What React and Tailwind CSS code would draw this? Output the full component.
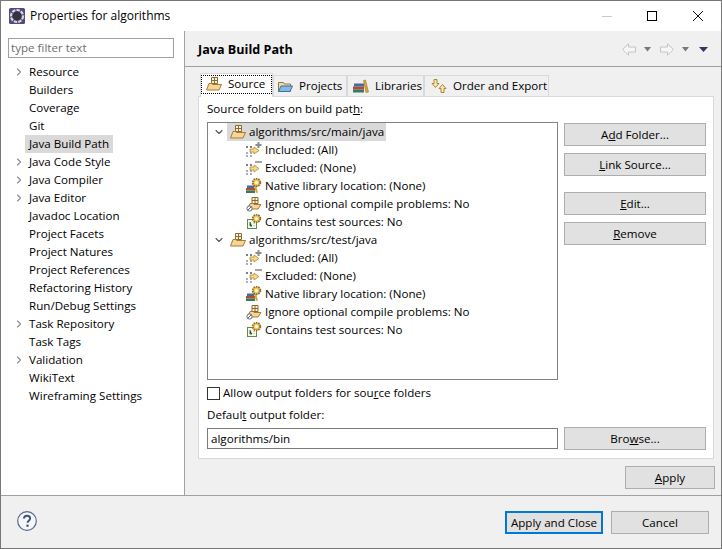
import { ChevronRight, ChevronDown } from "lucide-react"

const FONT = "font-['Open_Sans','Noto_Sans',sans-serif]"

const navItems = [
  ["Resource", true],
  ["Builders"],
  ["Coverage"],
  ["Git"],
  ["Java Build Path", false, true],
  ["Java Code Style", true],
  ["Java Compiler", true],
  ["Java Editor", true],
  ["Javadoc Location"],
  ["Project Facets"],
  ["Project Natures"],
  ["Project References"],
  ["Refactoring History"],
  ["Run/Debug Settings"],
  ["Task Repository", true],
  ["Task Tags"],
  ["Validation", true],
  ["WikiText"],
  ["Wireframing Settings"],
]

function EclipseIcon() {
  return (
    <svg width="16" height="16" viewBox="0 0 16 16">
      <rect x="0" y="0" width="16" height="16" rx="1.5" fill="#54487c" />
      <circle cx="8" cy="8" r="6" fill="none" stroke="#d8d8dc" strokeWidth="2.2" strokeDasharray="3.4 1.1" />
      <circle cx="8" cy="8" r="4.4" fill="#34323e" />
    </svg>
  )
}

function SourceFolderIcon() {
  return (
    <svg width="16" height="16" viewBox="0 0 16 16">
      <path d="M5.5 1.5h6v6h-6z" fill="#fbf3e0" stroke="#8a6a30" />
      <path d="M8.5 1.5v6M5.5 4.5h6" stroke="#8a6a30" />
      <path d="M0.5 14 3 7.5h2.5l1 1h9L13 14z" fill="#f6d596" stroke="#a67c34" />
    </svg>
  )
}

function ProjectIcon() {
  return (
    <svg width="16" height="16" viewBox="0 0 16 16">
      <path d="M1.5 4.5h5l1 1.5h6v7.5h-12z" fill="#eadcae" stroke="#8c7a45" />
      <path d="M1.5 13.5 4 8h11.5L13 13.5z" fill="#86b8e2" stroke="#3f6f9f" />
    </svg>
  )
}

function LibraryIcon() {
  return (
    <svg width="16" height="16" viewBox="0 0 16 16">
      <rect x="0" y="11.5" width="11" height="3" fill="#2f7f5f" />
      <rect x="0" y="8.5" width="11" height="3" fill="#b04a3a" />
      <rect x="1" y="5.5" width="10" height="3" fill="#3f6f9f" />
      <path d="M10.5 2.5 12.5 2l3 12-2.5.5z" fill="#e0a23c" stroke="#a8741f" strokeWidth="0.6" />
    </svg>
  )
}

function OrderIcon() {
  return (
    <svg width="16" height="16" viewBox="0 0 16 16">
      <path d="M3 1.5h3v4h2l-3.5 4-3.5-4h2z" fill="#fbe7a8" stroke="#a8873a" />
      <path d="M10 14.5h3v-4h2l-3.5-4-3.5 4h2z" fill="#fbe7a8" stroke="#a8873a" />
    </svg>
  )
}

function FilterIcon({ minus }) {
  return (
    <svg width="16" height="16" viewBox="0 0 16 16">
      <path d="M0 5h2M1 4v2M4 5h2M5 4v2M0 11h2M4 11h2M0 14h2M4 14h2" stroke="#3a4a6a" strokeWidth="0.9" />
      <path d="M4 7h4V5l5 3.5L8 12v-2H4z" fill="#f6d98a" stroke="#b58a30" strokeWidth="0.8" />
      {minus ? (
        <path d="M9 2h7" stroke="#8c8c8c" strokeWidth="1.6" />
      ) : (
        <path d="M12.5 0v6M9.5 3h6" stroke="#8c8c8c" strokeWidth="2" />
      )}
    </svg>
  )
}

function GearDot({ x, y }) {
  return (
    <g>
      <circle cx={x} cy={y} r="3.8" fill="#f0c860" stroke="#8f6d22" strokeWidth="1.8" strokeDasharray="1.6 0.8" />
      <circle cx={x} cy={y} r="1.5" fill="#fff" />
    </g>
  )
}

function NativeIcon() {
  return (
    <svg width="16" height="16" viewBox="0 0 16 16">
      <rect x="0" y="12.5" width="9" height="2.5" fill="#2f7f5f" />
      <rect x="0" y="10" width="9" height="2.5" fill="#b04a3a" />
      <rect x="1" y="7.5" width="7" height="2.5" fill="#3f6f9f" />
      <path d="M8 8l2 7 2-.6-2-6.5z" fill="#e0a23c" />
      <GearDot x={10.5} y={4.5} />
    </svg>
  )
}

function IgnoreIcon() {
  return (
    <svg width="16" height="16" viewBox="0 0 16 16">
      <path d="M6 1.5h6v6H6z" fill="#fbf3e0" stroke="#8a6a30" />
      <path d="M9 1.5v6M6 4.5h6" stroke="#8a6a30" />
      <path d="M2 12.5 4 7.5h3l1 1h7l-3 4.5H4z" fill="#f6d596" stroke="#a67c34" />
      <circle cx="3.5" cy="12.5" r="2.6" fill="#fff" stroke="#5a6a7a" />
      <path d="M1.7 14.3 5.3 10.7" stroke="#5a6a7a" />
    </svg>
  )
}

function TestIcon() {
  return (
    <svg width="16" height="16" viewBox="0 0 16 16">
      <rect x="1.5" y="5.5" width="9" height="9" fill="#f4f8e8" stroke="#5f8a4a" />
      <path d="M4 8v4h2M8 9v.5M8 11.5v.5" stroke="#3f7a3a" />
      <GearDot x={10.5} y={4.5} />
    </svg>
  )
}

function NavArrow({ right }) {
  return (
    <svg width="14" height="13" viewBox="0 0 14 13">
      <path
        d={right ? "M0.5 4h7V0.8l6 5.7-6 5.7V9h-7z" : "M13.5 4h-7V0.8l-6 5.7 6 5.7V9h7z"}
        fill="#f6f6f6"
        stroke="#c4c4c4"
      />
    </svg>
  )
}

function DropTriangle({ dark }) {
  return (
    <svg width={dark ? 9 : 7} height="5" viewBox={dark ? "0 0 9 5" : "0 0 7 5"}>
      <path d={dark ? "M0 0h9L4.5 5z" : "M0 0h7L3.5 4.5z"} fill={dark ? "#3d2f66" : "#77777c"} />
    </svg>
  )
}

function Btn({ children, className = "" }) {
  return (
    <button className={`h-[23px] border border-[#adadad] bg-[#e1e1e1] text-center leading-[20px] text-black ${className}`}>
      {children}
    </button>
  )
}

function TreeRow({ icon, label, root, selected }) {
  return (
    <div className="flex h-[18px] items-center">
      {root ? (
        <>
          <span className="flex w-[18px] justify-center pl-[2px]">
            <ChevronDown size={12} strokeWidth={2.2} color="#555" />
          </span>
          <span className={`flex h-[18px] items-center pr-[2px] pl-[3px] ${selected ? "bg-[#d9d9d9]" : ""}`}>
            <span className="mr-[3px]">{icon}</span>
            {label}
          </span>
        </>
      ) : (
        <div className="flex items-center whitespace-nowrap pl-[37px]">
          <span className="mr-[3px] shrink-0">{icon}</span>
          {label}
        </div>
      )}
    </div>
  )
}

function SourceEntry({ path, selected }) {
  return (
    <>
      <TreeRow root selected={selected} icon={<SourceFolderIcon />} label={path} />
      <TreeRow icon={<FilterIcon />} label="Included: (All)" />
      <TreeRow icon={<FilterIcon minus />} label="Excluded: (None)" />
      <TreeRow icon={<NativeIcon />} label="Native library location: (None)" />
      <TreeRow icon={<IgnoreIcon />} label="Ignore optional compile problems: No" />
      <TreeRow icon={<TestIcon />} label="Contains test sources: No" />
    </>
  )
}

function ActiveTab({ icon, label }) {
  return (
    <div className="relative z-10 -mb-px h-[24px] w-[73px] border border-b-0 border-[#d9d9d9] bg-white pt-px">
      <div className="flex h-[19px] items-center border border-dotted border-black pb-px pl-[4px]">
        <span className="mr-[6px]">{icon}</span>
        {label}
      </div>
    </div>
  )
}

function Tab({ icon, label, className = "" }) {
  return (
    <div className={`flex h-[21px] items-center border border-b-0 border-[#d9d9d9] ${className}`}>
      <span className="mr-[6px]">{icon}</span>
      {label}
    </div>
  )
}

export default function App() {
  return (
    <div className={`flex h-[549px] w-[722px] flex-col overflow-hidden border border-[#777777] bg-white text-[11.6px] text-black ${FONT}`}>
      {/* title bar */}
      <div className="flex h-[30px] shrink-0 items-center bg-white pl-[8px]">
        <EclipseIcon />
        <span className="ml-[5px] flex-1 text-[12px]">Properties for algorithms</span>
        <div className="flex h-[30px] items-center">
          <div className="mr-[35px] h-px w-[10px] bg-[#c8c8c8]" />
          <div className="mr-[36px] h-[10px] w-[10px] border border-black" />
          <svg width="10" height="10" viewBox="0 0 10 10" className="mr-[18px]">
            <path d="M0 0l10 10M10 0 0 10" stroke="#111" strokeWidth="1" />
          </svg>
        </div>
      </div>

      <div className="flex min-h-0 flex-1">
        {/* sidebar */}
        <div className="w-[184px] shrink-0 border-r border-[#a0a0a0] bg-white pt-[7px] pl-[7px]">
          <div className="flex h-[20px] w-[166px] items-center border border-[#a0a0a0] pl-[2px] text-[#6d6d6d]">
            type filter text
          </div>
          <div className="mt-[5px]">
            {navItems.map(([name, expandable, selected]) => (
              <div key={name} className="flex h-[18px] items-center">
                <span className="flex w-[17px] justify-center pl-[4px]">
                  {expandable && <ChevronRight size={12} strokeWidth={2.2} color="#8a8a8a" />}
                </span>
                <span className={`px-[4px] leading-[18px] ${selected ? "bg-[#d9d9d9]" : ""}`}>{name}</span>
              </div>
            ))}
          </div>
        </div>

        {/* main */}
        <div className="flex min-w-0 flex-1 flex-col bg-[#f0f0f0]">
          <div className="flex h-[36px] shrink-0 items-center justify-between border-b border-[#a0a0a0] pr-[13px] pl-[13px]">
            <span className="mt-[3px] text-[12.6px] font-bold">Java Build Path</span>
            <div className="mt-[2px] flex items-center">
              <NavArrow />
              <span className="ml-[8px] flex"><DropTriangle /></span>
              <span className="ml-[9px] flex"><NavArrow right /></span>
              <span className="ml-[8px] flex"><DropTriangle /></span>
              <span className="ml-[10px] flex"><DropTriangle dark /></span>
            </div>
          </div>

          <div className="flex-1 pt-[6px] pr-[7px] pl-[13px]">
            <div className="flex items-end pl-[2px]">
              <ActiveTab icon={<SourceFolderIcon />} label="Source" />
              <Tab icon={<ProjectIcon />} label="Projects" className="w-[74px] pl-[3px]" />
              <Tab icon={<LibraryIcon />} label="Libraries" className="w-[77px] pl-[5px]" />
              <Tab icon={<OrderIcon />} label="Order and Export" className="w-[125px] pl-[6px]" />
            </div>

            <div className="flex h-[363px] flex-col border border-[#d9d9d9] bg-white pt-[2px] pr-[7px] pl-[8px]">
              <div className="h-[20px] leading-[20px]">
                Source folders on build pat<u>h</u>:
              </div>
              <div className="mt-[3px] flex">
                <div className="h-[258px] w-[351px] shrink-0 border border-[#828282] pl-[1px]">
                  <SourceEntry path="algorithms/src/main/java" selected />
                  <SourceEntry path="algorithms/src/test/java" />
                </div>
                <div className="mt-px ml-[6px] flex flex-1 flex-col">
                  <Btn>A<u>d</u>d Folder...</Btn>
                  <Btn className="mt-[7px]"><u>L</u>ink Source...</Btn>
                  <Btn className="mt-[16px]"><u>E</u>dit...</Btn>
                  <Btn className="mt-[7px]"><u>R</u>emove</Btn>
                </div>
              </div>

              <div className="mt-[5px] flex h-[16px] items-center">
                <span className="h-[13px] w-[13px] border border-[#333333] bg-white" />
                <span className="ml-[3px]">Allow output folders for sou<u>r</u>ce folders</span>
              </div>
              <div className="mt-[5px] h-[18px] leading-[18px]">
                Defaul<u>t</u> output folder:
              </div>
              <div className="mt-[3px] flex items-center">
                <div className="flex h-[21px] w-[351px] items-center border border-[#7a7a7a] pl-[3px]">algorithms/bin</div>
                <Btn className="ml-[6px] flex-1">Bro<u>w</u>se...</Btn>
              </div>
            </div>

            <div className="mt-[7px] -mr-px flex justify-end">
              <Btn className="w-[90px]"><u>A</u>pply</Btn>
            </div>
          </div>
        </div>
      </div>

      {/* footer */}
      <div className="flex h-[53px] shrink-0 items-center border-t border-[#a0a0a0] bg-[#f0f0f0] pr-[12px] pl-[16px]">
        <svg width="20" height="20" viewBox="0 0 20 20" className="-mt-[2px]">
          <circle cx="10" cy="10" r="9.3" fill="#f6f7fa" stroke="#54688c" strokeWidth="1.2" />
          <path d="M7 7.6c0-1.8 1.4-2.8 3.1-2.8s3 1 3 2.6c0 2.3-2.6 2.3-2.6 4.4" fill="none" stroke="#3f5580" strokeWidth="2" />
          <rect x="9.4" y="13.6" width="2.2" height="2.2" fill="#3f5580" />
        </svg>
        <div className="mt-px ml-auto flex items-center">
          <button className="h-[23px] w-[98px] border-2 border-[#0078d7] bg-[#e1e1e1] leading-[18px]">Apply and Close</button>
          <Btn className="ml-[8px] w-[98px]">Cancel</Btn>
        </div>
      </div>
    </div>
  )
}
